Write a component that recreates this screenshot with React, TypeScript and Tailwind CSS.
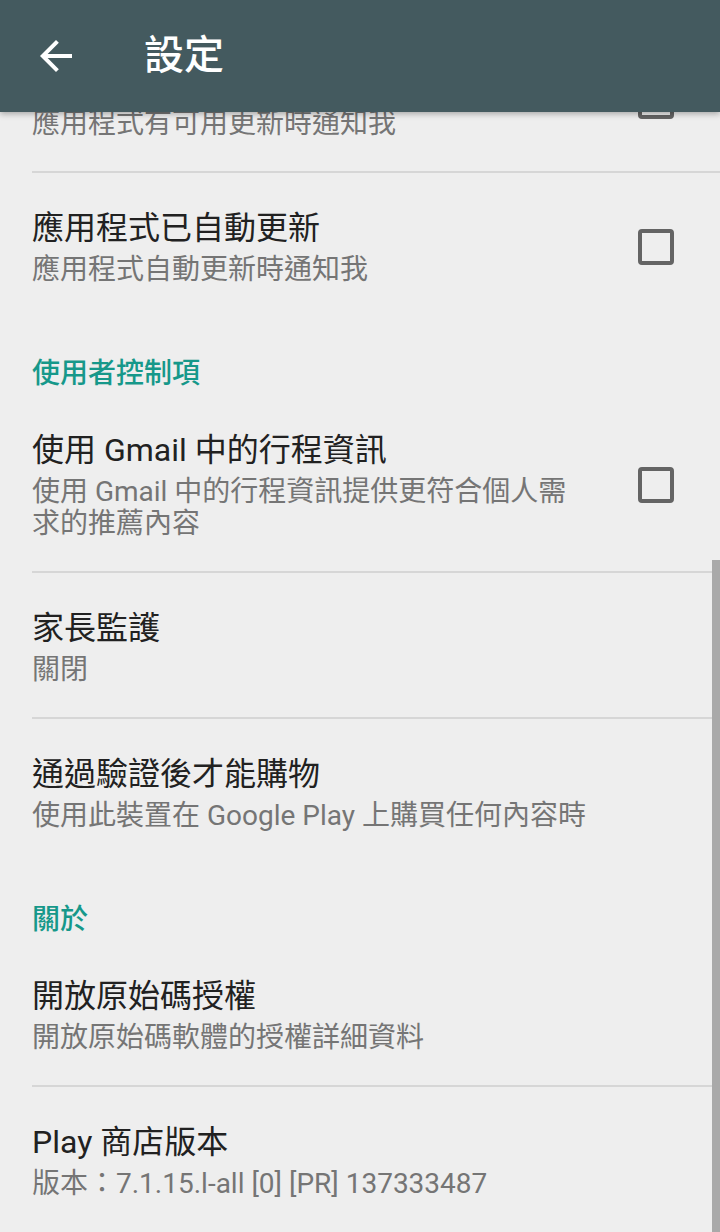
import React from "react";

const font = { fontFamily: 'Roboto, "Noto Sans CJK TC", sans-serif' };

function CheckBox() {
  return <div className="h-[36px] w-[36px] rounded-[4px] border-[4px] border-[#646464]" />;
}

function Divider() {
  return <div className="ml-[32px] h-[2px] bg-[#d6d6d6]" />;
}

function Category({ label }: { label: string }) {
  return (
    <div className="px-[32px] pt-[41px] pb-[5px] text-[28px] font-medium leading-[32px] text-[#16988a]">
      {label}
    </div>
  );
}

function Pref({
  title,
  summary,
  checkbox,
}: {
  title: string;
  summary: string;
  checkbox?: boolean;
}) {
  return (
    <div className="flex items-center pl-[32px] pt-[35px] pb-[31px]">
      <div className="min-w-0 flex-1">
        <div className="text-[32px] leading-[40px] text-[#212121]">{title}</div>
        <div className="mt-[6px] text-[28px] leading-[32px] text-[#757575]">{summary}</div>
      </div>
      {checkbox && (
        <div className="flex w-[142px] shrink-0 justify-end pr-[46px]">
          <CheckBox />
        </div>
      )}
    </div>
  );
}

export default function App() {
  return (
    <div className="relative h-[1232px] w-[720px] overflow-hidden bg-[#eeeeee]" style={font}>
      {/* 工具列 */}
      <header className="relative z-10 flex h-[112px] items-center bg-[#445a5f] shadow-[0_2px_6px_rgba(0,0,0,0.3)]">
        <button type="button" aria-label="返回" className="ml-[32px] flex h-[48px] w-[48px] items-center justify-center">
          <svg viewBox="0 0 24 24" width="48" height="48" fill="#ffffff">
            <path d="M20 11H7.83l5.59-5.59L12 4l-8 8 8 8 1.41-1.41L7.83 13H20v-2z" />
          </svg>
        </button>
        <h1 className="ml-[64px] text-[40px] font-medium leading-none text-white">設定</h1>
      </header>

      {/* 清單 */}
      <div className="h-[1120px] overflow-hidden">
        <div className="-mt-[85px]">
          <Pref title="應用程式更新可供使用" summary="應用程式有可用更新時通知我" checkbox />
          <Divider />
          <Pref title="應用程式已自動更新" summary="應用程式自動更新時通知我" checkbox />

          <Category label="使用者控制項" />
          <Pref
            title="使用 Gmail 中的行程資訊"
            summary="使用 Gmail 中的行程資訊提供更符合個人需求的推薦內容"
            checkbox
          />
          <Divider />
          <Pref title="家長監護" summary="關閉" />
          <Divider />
          <Pref title="通過驗證後才能購物" summary="使用此裝置在 Google Play 上購買任何內容時" />

          <Category label="關於" />
          <Pref title="開放原始碼授權" summary="開放原始碼軟體的授權詳細資料" />
          <Divider />
          <Pref title="Play 商店版本" summary="版本：7.1.15.l-all [0] [PR] 137333487" />
        </div>
      </div>

      {/* 捲軸 */}
      <div className="absolute right-0 top-[560px] bottom-0 w-[8px] bg-[#a9a9a9]" />
    </div>
  );
}
